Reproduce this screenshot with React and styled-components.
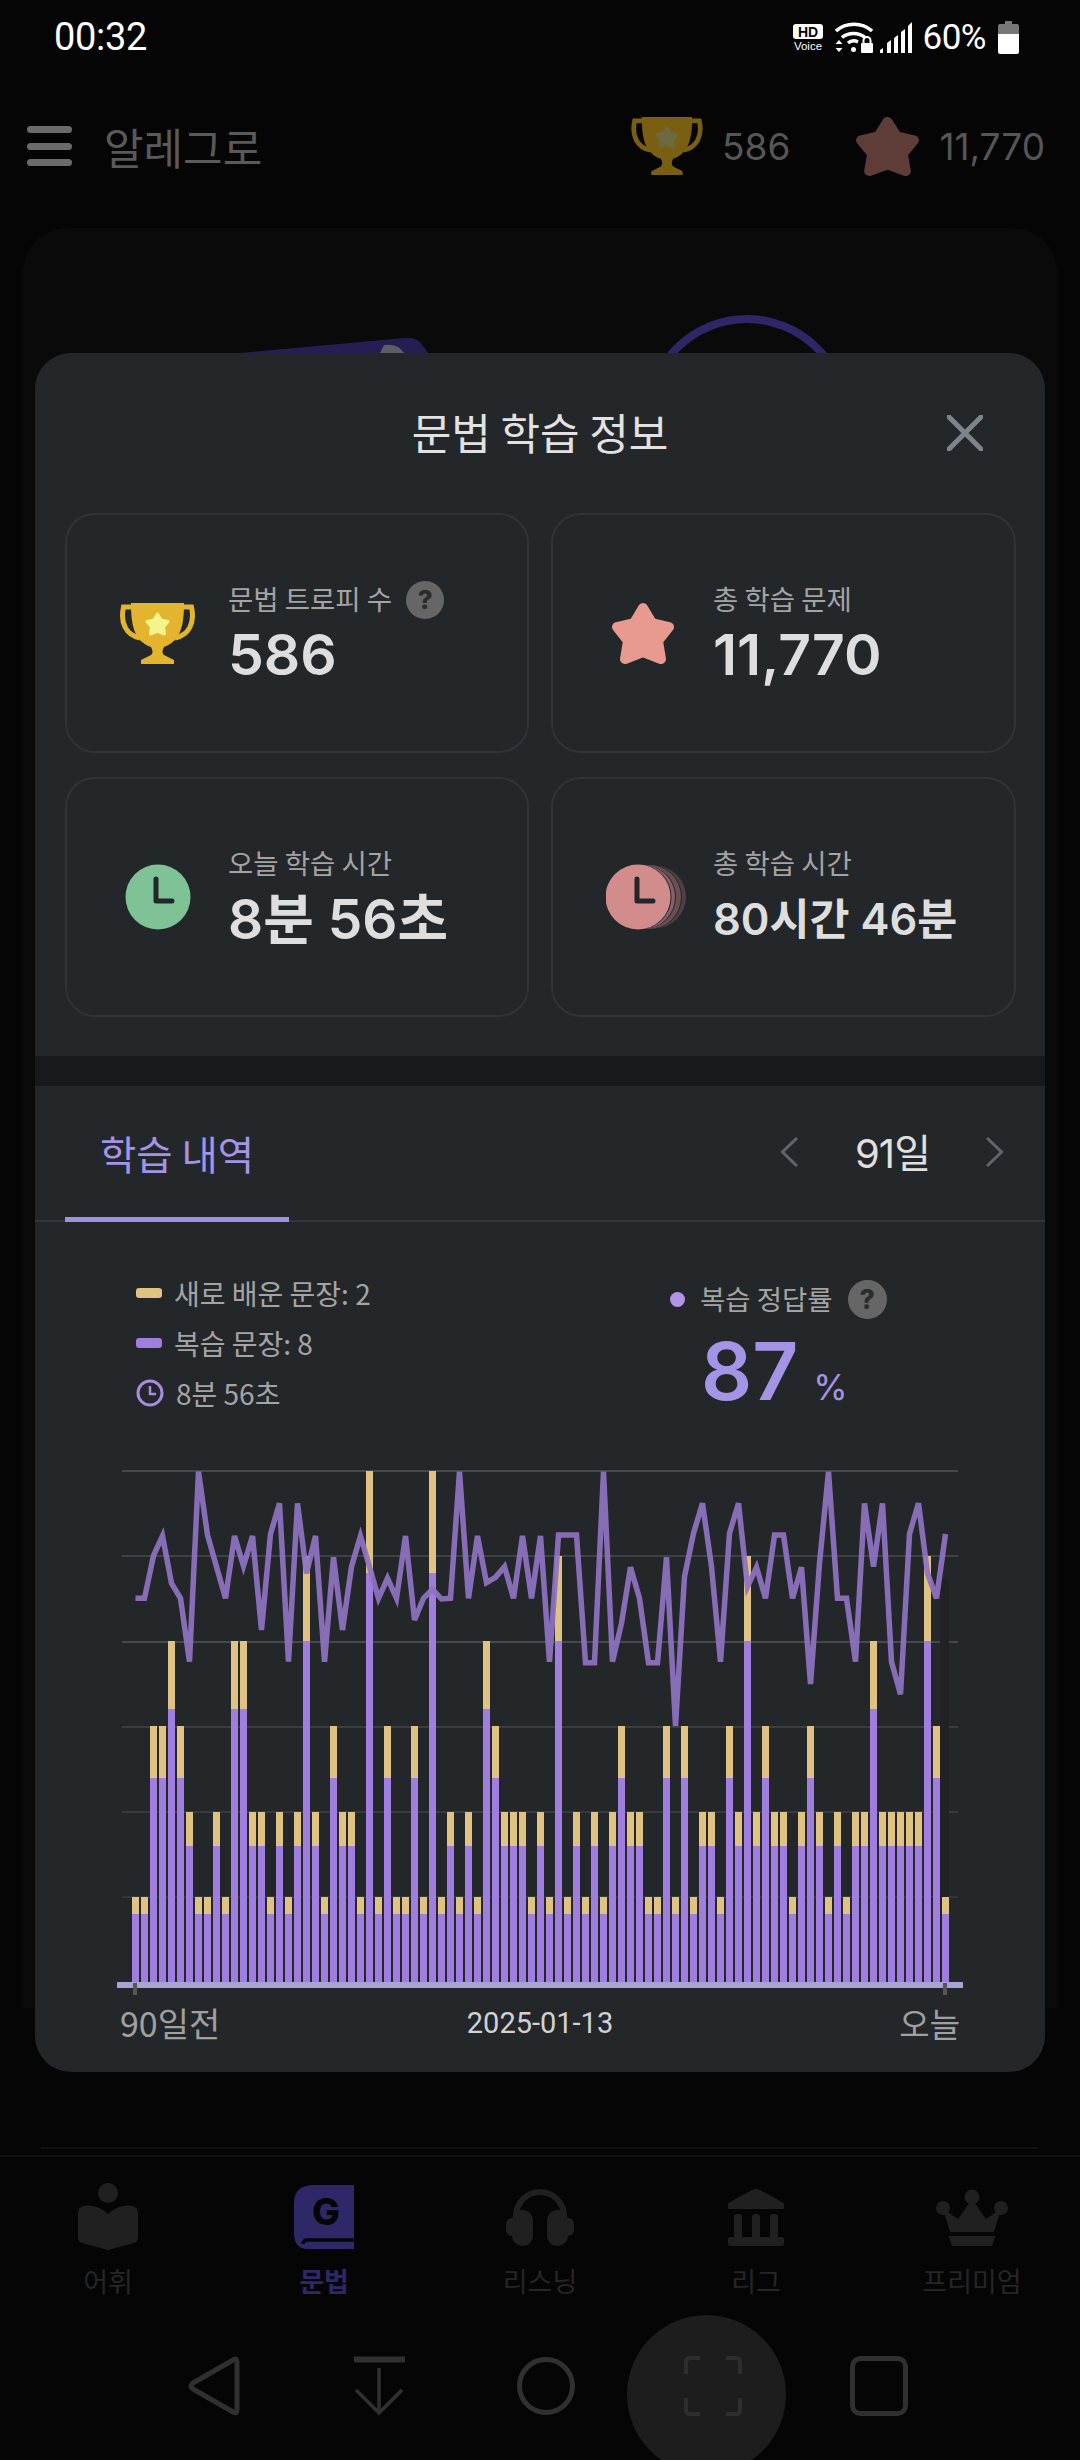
import React from "react";
import styled, { createGlobalStyle } from "styled-components";

const FONT = `Inter, "Noto Sans CJK KR", "Noto Sans", sans-serif`;
const KR = `"Noto Sans CJK KR", "Noto Sans", sans-serif`;
const ROBOTO = `Roboto, "Noto Sans CJK KR", sans-serif`;

const Global = createGlobalStyle`
  html, body { margin: 0; padding: 0; background: #050505; }
  * { box-sizing: border-box; }
`;

const Page = styled.div`
  position: relative; width: 1080px; height: 2460px; overflow: hidden;
  background: #050505; display: flex; flex-direction: column; font-family: ${KR};
`;
const StatusBar = styled.div`
  height: 80px; padding: 0 61px 6px 54px; display: flex; align-items: center; justify-content: space-between;
  color: #fff;
`;
const Clock = styled.span`font: 400 38px/1 ${ROBOTO}; letter-spacing: -0.3px;`;
const StatusIcons = styled.div`display: flex; align-items: center; gap: 7px;`;
const Percent = styled.span`font: 400 35px/1 ${ROBOTO}; margin: 0 5px 0 4px; letter-spacing: -0.5px;`;

const Header = styled.header`
  height: 148px; padding: 0 35px 16px 27px; display: flex; align-items: center;
`;
const Burger = styled.div`
  width: 45px; height: 40px; display: flex; flex-direction: column; justify-content: space-between; margin-right: 32px;
`;
const BurgerLine = styled.i`display: block; height: 7px; border-radius: 4px; background: #6a6a6a;`;
const Brand = styled.span`font: 400 43px/1 ${KR}; color: #5a5a5a; flex: 1;`;
const Stat = styled.div`display: flex; align-items: center; gap: ${p => p.$gap}px; margin-left: ${p => p.$ml}px;`;
const StatNum = styled.span`font: 400 37px/1 ${FONT}; color: #565656;`;

const BackCard = styled.div`
  margin: 0 22px; height: 1780px; border-radius: 46px 46px 0 0; background: #0a0a0a; padding-top: 87px; flex: none;
`;
const Art = styled.svg`display: block;`;
const Rule = styled.div`height: 2px; margin: 139px 42px 6px 41px; background: #0d0f10;`;

const TabBar = styled.nav`
  height: 159px; border-top: 2px solid #0c0e0f; display: grid; grid-template-columns: repeat(5, 216px); padding-top: 27px;
`;
const TabItem = styled.div`
  display: flex; flex-direction: column; align-items: center; color: ${p => (p.$active ? "#2f2868" : "#262626")};
`;
const TabIconBox = styled.div`
  height: 66px; display: flex; align-items: center; justify-content: center; color: ${p => (p.$active ? "#2f2868" : "#202020")};
`;
const TabLabel = styled.span`font: ${p => (p.$active ? 700 : 400)} 27px/1 ${KR}; margin-top: 17px;`;

const SystemNav = styled.div`
  height: 144px; padding-left: 188px; display: flex; align-items: center; flex: none; color: #303030;
`;
const NavGap = styled.div`width: ${p => p.$w}px; flex: none;`;
const Capture = styled.div`
  width: 159px; height: 159px; flex: none; border-radius: 50%; background: #1d1d1d; margin-top: 16px; padding: 0 0 16px 12px;
  display: flex; align-items: center; justify-content: center; color: #2e2e2e;
`;

const Modal = styled.section`
  position: absolute; left: 35px; top: 353px; width: 1010px; height: 1719px; border-radius: 36px; background: #24272a;
  overflow: hidden; color: #e4e4e4; font-family: ${FONT};
`;
const ModalHead = styled.div`
  height: 160px; display: grid; grid-template-columns: 1fr auto 1fr; align-items: center;
`;
const ModalTitle = styled.h2`margin: 0 0 4px; font: 400 43px/1 ${KR}; color: #e2e2e2; letter-spacing: 0;`;
const CloseBtn = styled.div`justify-self: end; margin-right: 62px; width: 36px; height: 36px; color: #7d858c;`;
const StatGrid = styled.div`
  display: grid; grid-template-columns: 464px 465px; gap: 24px 22px; padding: 0 30px 39px;
`;
const StatCard = styled.div`
  height: 240px; border: 2px solid #303337; border-radius: 30px; display: flex; align-items: center;
  padding-left: ${p => p.$pl}px;
`;
const StatIcon = styled.div`width: ${p => p.$w}px; flex: none; display: flex; justify-content: flex-start;`;
const StatBody = styled.div`display: flex; flex-direction: column; gap: 6px;`;
const StatLabelRow = styled.div`display: flex; align-items: center; gap: 14px; height: 38px;`;
const StatLabel = styled.span`font: 400 27.5px/1 ${KR}; color: #a4a4a4; margin-top: -2px;`;
const StatValue = styled.div`font: 600 ${p => p.$size}px/60px ${FONT}; color: #dedede;`;
const Help = styled.span`
  width: ${p => p.$s}px; height: ${p => p.$s}px; border-radius: 50%; background: #666; color: #2a2c2e; flex: none;
  display: inline-flex; align-items: center; justify-content: center; font: 800 ${p => p.$s * 0.68}px/1 ${FONT};
`;
const Band = styled.div`height: 30px; background: #18191c;`;
const TabsRow = styled.div`
  height: 136px; border-bottom: 2px solid #34373a; display: flex; align-items: flex-start; justify-content: space-between; padding-left: 30px;
`;
const ActiveTab = styled.div`
  position: relative; width: 224px; height: 136px; padding-top: 45px; text-align: center; font: 400 39.5px/1.1 ${KR}; color: #a494e6;
  &::after { content: ""; position: absolute; left: 0; right: 0; bottom: 0; height: 5px; background: #a18fe2; }
`;
const RangeNav = styled.div`display: flex; align-items: center; height: 136px; padding: 0 41px 5px 0; color: #5e666c;`;
const RangeText = styled.span`width: 186px; text-align: center; font: 400 40px/1 ${FONT}; color: #e0e0e0; letter-spacing: -1px; padding: 5px 0 0 1px;`;

const Summary = styled.div`
  height: 238px; padding: 46px 0 0 101px; display: grid; grid-template-columns: 534px auto;
`;
const Legend = styled.div`display: flex; flex-direction: column;`;
const LegendRow = styled.div`height: 50px; display: flex; align-items: center; gap: 12px;`;
const Swatch = styled.i`display: block; width: 26px; height: 10px; border-radius: 3px; background: ${p => p.$c};`;
const LegendText = styled.span`font: 400 28px/1 ${KR}; color: #a4a4a4;`;
const Rate = styled.div`display: flex; flex-direction: column;`;
const RateHead = styled.div`display: flex; align-items: center; height: 60px; margin-top: 1px;`;
const Dot = styled.i`display: block; width: 15px; height: 15px; border-radius: 50%; background: #b393ea; margin-right: 15px;`;
const RateLabel = styled.span`font: 400 27.5px/1 ${KR}; color: #a4a4a4; margin-right: 15px;`;
const RateValue = styled.div`
  display: flex; align-items: baseline; margin: 10px 0 0 31px; color: #a494e6;
`;
const RateNum = styled.span`font: 600 80px/64px ${FONT};`;
const RateUnit = styled.span`font: 400 35px/1 ${FONT}; margin-left: 15px;`;

const ChartArea = styled.svg`display: block; margin-left: 75px;`;
const AxisLabels = styled.div`
  margin: 3px 85px 0; height: 40px; display: grid; grid-template-columns: 1fr auto 1fr; align-items: center; color: #a0a0a0;
`;
const AxisEnd = styled.span`font: 400 ${p => p.$size}px/1 ${KR}; text-align: ${p => p.$align};`;
const AxisDate = styled.span`font: 400 29px/1 ${ROBOTO}; color: #d2d2d2;`;

const K = [1,1,3,3,4,3,2,1,1,2,1,4,4,2,2,1,2,1,2,5,2,1,3,2,2,1,6,1,3,1,1,3,1,6,1,2,1,2,1,4,3,2,2,2,1,2,1,5,1,2,1,2,1,2,3,2,2,1,1,3,1,3,1,2,2,1,3,2,5,2,3,2,2,1,2,3,2,1,2,1,2,2,4,2,2,2,2,2,5,3,1];
const LY = [445,445,317,258,400,445,635,65,255,350,445,258,348,258,540,252,160,635,160,370,258,635,322,540,350,258,350,445,385,445,258,510,445,418,447,445,65,445,258,398,382,350,445,258,445,258,635,255,255,255,638,638,65,635,520,352,445,638,638,322,828,380,250,160,350,635,250,160,410,352,445,255,255,445,352,702,340,65,445,445,635,160,350,160,635,733,252,160,370,445,252];
const linePts = LY.map((y, i) => `${135.5 + 9 * i},${(1450 + y / 3).toFixed(1)}`).join(" ");
const GRID = [[1471, 0.9], [1556, 0.7], [1642, 0.9], [1727, 0.6], [1812, 0.55], [1897, 0.4]];
const STEP = 85.2;

const Chart = () => (
  <ChartArea width="860" height="540" viewBox="110 1460 860 540">
    {GRID.map(([y, o]) => <line key={y} x1="122" x2="958" y1={y} y2={y} stroke="#4a4d50" strokeWidth="2" opacity={o} />)}
    <rect x="940" y="1578" width="9" height="404" fill="#202225" />
    <g shapeRendering="crispEdges">
      {K.map((k, i) => {
        const x = 132 + 9 * i;
        const top = 1982 - STEP * k;
        const mid = 1982 - STEP * k * 0.8;
        return (
          <g key={i}>
            <rect x={x} y={top} width="7" height={mid - top} fill="#e0c282" />
            <rect x={x} y={mid} width="7" height={1982 - mid} fill="#a07ee0" />
          </g>
        );
      })}
      <rect x="117" y="1982" width="846" height="6" fill="#a7a4d4" />
      <rect x="133" y="1983" width="4" height="12" fill="#555" />
      <rect x="943" y="1983" width="4" height="12" fill="#555" />
    </g>
    <polyline points={linePts} fill="none" stroke="#8f73c2" strokeOpacity="0.92" strokeWidth="5.5" />
  </ChartArea>
);

const STAR = "32,6 41,21 58,25 47,39 50,57 32,50 14,57 17,39 6,25 23,21";
const StarIcon = ({ c, w = 64, h = 63 }) => (
  <svg width={w} height={h} viewBox="0 0 64 63" preserveAspectRatio="none">
    <polygon points={STAR} fill={c} stroke={c} strokeWidth="10" strokeLinejoin="round" />
  </svg>
);
const TrophyIcon = ({ c, s, w = 75, h = 61 }) => (
  <svg width={w} height={h} viewBox="0 0 75 61">
    <path d="M13 4 H3.5 C0 20 6 32 20 35 M62 4 H71.5 C75 20 69 32 55 35" fill="none" stroke={c} strokeWidth="5" />
    <path d="M11 0 H64 C64 22 61 38 44 44 C42 48 42 50 44 52 L54 57 V61 H21 V57 L31 52 C33 50 33 48 31 44 C14 38 11 22 11 0Z" fill={c} />
    <polygon points="37.5,11 41,17 48,18.5 43.5,24 44.5,31 37.5,28 30.5,31 31.5,24 27,18.5 34,17" fill={s} stroke={s} strokeWidth="3" strokeLinejoin="round" />
  </svg>
);
const FaceClock = ({ c, hand = "#24272a" }) => (
  <svg width="66" height="66" viewBox="0 0 66 66">
    <circle cx="33" cy="33" r="32.5" fill={c} />
    <path d="M31 15 V37 H47" fill="none" stroke={hand} strokeWidth="5" strokeLinejoin="round" strokeLinecap="round" />
  </svg>
);
const StackClock = () => (
  <svg width="82" height="66" viewBox="0 0 82 66">
    <circle cx="49" cy="33" r="31" fill="#4f4044" />
    <circle cx="44" cy="33" r="32" fill="#24272a" />
    <circle cx="43" cy="33" r="32" fill="#6a5055" />
    <circle cx="38" cy="33" r="32" fill="#24272a" />
    <circle cx="37" cy="33" r="32" fill="#86616a" />
    <circle cx="33" cy="33" r="32.5" fill="#24272a" />
    <circle cx="32" cy="33" r="32.5" fill="#d28c8c" />
    <path d="M31 15 V37 H47" fill="none" stroke="#24272a" strokeWidth="5" strokeLinejoin="round" strokeLinecap="round" />
  </svg>
);
const LegendClock = () => (
  <svg width="28" height="28" viewBox="0 0 28 28">
    <circle cx="14" cy="14" r="12" fill="none" stroke="#a98be0" strokeWidth="3" />
    <path d="M14 7 V15 H20" fill="none" stroke="#a98be0" strokeWidth="2.5" />
  </svg>
);
const Chev = ({ left }) => (
  <svg width="19" height="30" viewBox="0 0 19 30">
    <path d={left ? "M17 1 L2.5 15 L17 29" : "M2 1 L16.5 15 L2 29"} fill="none" stroke="currentColor" strokeWidth="3" />
  </svg>
);

const HdVoice = () => (
  <svg width="35" height="27" viewBox="0 0 35 27">
    <rect x="0" y="0" width="30" height="15" rx="3" fill="#fff" />
    <text x="15" y="13" textAnchor="middle" fontFamily="Liberation Sans" fontWeight="700" fontSize="14" fill="#050505">HD</text>
    <text x="15" y="26" textAnchor="middle" fontFamily="Liberation Sans" fontSize="11.5" fill="#fff">Voice</text>
  </svg>
);
const WifiIcon = () => (
  <svg width="38" height="32" viewBox="0 0 38 32">
    <path d="M1 10 C11 1 27 1 37 10" fill="none" stroke="#fff" strokeWidth="3.5" />
    <path d="M7 16.5 C13 11 24 11 30 16.5" fill="none" stroke="#fff" strokeWidth="3.5" />
    <path d="M13 22 C16 19.5 20 19.5 23 21" fill="none" stroke="#fff" strokeWidth="3.5" />
    <circle cx="18.5" cy="28.5" r="2.5" fill="#fff" />
    <path d="M4 21 L7.5 17 L0.5 17Z" transform="rotate(180 4 20)" fill="#fff" />
    <path d="M0.5 27 H7.5 L4 31Z" fill="#fff" />
    <rect x="26" y="22" width="12" height="10" rx="1" fill="#fff" />
    <path d="M28.5 22 V19.5 A3.5 3.5 0 0 1 35.5 19.5 V22" fill="none" stroke="#fff" strokeWidth="2" />
  </svg>
);
const SignalIcon = () => (
  <svg width="32" height="32" viewBox="0 0 32 32">
    <path d="M0 32 V29 L3 27 V32Z M7 32 V22 L11 19 V32Z M14 32 V17 L18 14 V32Z M21 32 V11 L25 8 V32Z M28 32 V5 L32 1 V32Z" fill="#fff" />
  </svg>
);
const BatteryIcon = () => (
  <svg width="21" height="33" viewBox="0 0 21 33">
    <path d="M7 0 H14 V3 H19 Q21 3 21 5 V13 H0 V5 Q0 3 2 3 H7Z" fill="#777" />
    <path d="M0 13 H21 V31 Q21 33 19 33 H2 Q0 33 0 31Z" fill="#fff" />
  </svg>
);

const ReadIcon = () => (
  <svg width="60" height="68" viewBox="0 0 60 68" fill="currentColor">
    <circle cx="30" cy="10" r="10" />
    <path d="M6 23 C14 21 24 25 30 31 C36 25 46 21 54 23 Q60 24 60 30 V55 Q60 59 56 60 L34 66 Q30 68 26 66 L4 60 Q0 59 0 55 V30 Q0 24 6 23Z" />
  </svg>
);
const BookIcon = () => (
  <svg width="60" height="64" viewBox="0 0 60 64">
    <path d="M20 0 H60 V64 H14 Q0 64 0 48 V18 Q0 0 20 0Z" fill="currentColor" />
    <path d="M60 55 H14 Q9 55 9 59" fill="none" stroke="#050505" strokeWidth="3.5" />
    <text x="32" y="40" textAnchor="middle" fontFamily="Inter" fontWeight="800" fontSize="37" fill="#050505">G</text>
  </svg>
);
const PhonesIcon = () => (
  <svg width="68" height="58" viewBox="0 0 68 58" fill="currentColor">
    <path d="M10 34 V28 A24 24 0 0 1 58 28 V34" fill="none" stroke="currentColor" strokeWidth="6" />
    <rect x="6" y="22" width="21" height="36" rx="10" />
    <rect x="41" y="22" width="21" height="36" rx="10" />
    <rect x="0" y="30" width="12" height="18" rx="6" />
    <rect x="56" y="30" width="12" height="18" rx="6" />
  </svg>
);
const BankIcon = () => (
  <svg width="56" height="58" viewBox="0 0 56 58" fill="currentColor">
    <path d="M25 1.5 Q28 0 31 1.5 L56 15 V21 H0 V15Z" />
    <rect x="6" y="26" width="8" height="26" rx="3" />
    <rect x="24" y="26" width="8" height="26" rx="3" />
    <rect x="42" y="26" width="8" height="26" rx="3" />
    <rect x="0" y="49" width="56" height="9" rx="2" />
  </svg>
);
const CrownIcon = () => (
  <svg width="72" height="57" viewBox="0 0 72 57" fill="currentColor">
    <circle cx="36" cy="8" r="7.5" />
    <circle cx="7" cy="19" r="7" />
    <circle cx="65" cy="19" r="7" />
    <path d="M36 10 L50 30 L65 20 L58 43 H14 L7 20 L22 30Z" />
    <path d="M12.5 47 H59.5 L56 57 H16Z" />
  </svg>
);

const TABS = [
  { label: "어휘", Icon: ReadIcon },
  { label: "문법", Icon: BookIcon, active: true },
  { label: "리스닝", Icon: PhonesIcon },
  { label: "리그", Icon: BankIcon },
  { label: "프리미엄", Icon: CrownIcon },
];

export default function App() {
  return (
    <Page>
      <Global />
      <StatusBar>
        <Clock>00:32</Clock>
        <StatusIcons>
          <HdVoice />
          <WifiIcon />
          <SignalIcon />
          <Percent>60%</Percent>
          <BatteryIcon />
        </StatusIcons>
      </StatusBar>
      <Header>
        <Burger><BurgerLine /><BurgerLine /><BurgerLine /></Burger>
        <Brand>알레그로</Brand>
        <Stat $gap={19}>
          <TrophyIcon c="#7a5e12" s="#6d6a40" w={72} h={58} />
          <StatNum>586</StatNum>
        </Stat>
        <Stat $gap={19} $ml={65}>
          <StarIcon c="#5e3d38" w={65} h={61} />
          <StatNum>11,770</StatNum>
        </Stat>
      </Header>
      <BackCard>
        <Art width="1036" height="40" viewBox="0 0 1036 40">
          <path d="M218 38 L382 23 Q392 22 398 27 L406 38Z" fill="#241e52" />
          <path d="M358 38 L362 30 Q376 28 382 38Z" fill="#5d5d66" />
          <circle cx="725" cy="103" r="99" fill="none" stroke="#2e2666" strokeWidth="8" />
        </Art>
      </BackCard>
      <Rule />
      <TabBar>
        {TABS.map(({ label, Icon, active }) => (
          <TabItem key={label} $active={active}>
            <TabIconBox $active={active}><Icon /></TabIconBox>
            <TabLabel $active={active}>{label}</TabLabel>
          </TabItem>
        ))}
      </TabBar>
      <SystemNav>
        <svg width="52" height="60" viewBox="0 0 52 60">
          <path d="M46 3.5 Q49 2 49 6 V54 Q49 58 46 56.5 L5 33 Q1 30 5 27Z" fill="none" stroke="currentColor" strokeWidth="5" strokeLinejoin="round" />
        </svg>
        <NavGap $w={113} />
        <svg width="53" height="60" viewBox="0 0 53 60">
          <path d="M1 3.5 H52" stroke="currentColor" strokeWidth="6" />
          <path d="M26 12 V57 M3 34 L26 57 L49 34" fill="none" stroke="currentColor" strokeWidth="3.5" />
        </svg>
        <NavGap $w={111} />
        <svg width="58" height="60" viewBox="0 0 58 60">
          <circle cx="29" cy="30" r="26.5" fill="none" stroke="currentColor" strokeWidth="5" />
        </svg>
        <NavGap $w={52} />
        <Capture>
          <svg width="58" height="60" viewBox="0 0 58 60">
            <path d="M2 18 V6 Q2 2 6 2 H16 M42 2 H52 Q56 2 56 6 V18 M56 42 V54 Q56 58 52 58 H42 M16 58 H6 Q2 58 2 54 V42" fill="none" stroke="currentColor" strokeWidth="4" />
          </svg>
        </Capture>
        <NavGap $w={64} />
        <svg width="58" height="60" viewBox="0 0 58 60">
          <rect x="2.5" y="2.5" width="53" height="55" rx="8" fill="none" stroke="currentColor" strokeWidth="5" />
        </svg>
      </SystemNav>

      <Modal>
        <ModalHead>
          <span />
          <ModalTitle>문법 학습 정보</ModalTitle>
          <CloseBtn>
            <svg width="36" height="36" viewBox="0 0 36 36">
              <path d="M2 2 L34 34 M34 2 L2 34" stroke="currentColor" strokeWidth="5" strokeLinecap="round" />
            </svg>
          </CloseBtn>
        </ModalHead>
        <StatGrid>
          <StatCard $pl={53}>
            <StatIcon $w={108}><TrophyIcon c="#e3b42e" s="#f4f48d" /></StatIcon>
            <StatBody>
              <StatLabelRow><StatLabel>문법 트로피 수</StatLabel><Help $s={38}>?</Help></StatLabelRow>
              <StatValue $size={57}>586</StatValue>
            </StatBody>
          </StatCard>
          <StatCard $pl={58}>
            <StatIcon $w={102}><StarIcon c="#e99a90" /></StatIcon>
            <StatBody>
              <StatLabelRow><StatLabel>총 학습 문제</StatLabel></StatLabelRow>
              <StatValue $size={57}>11,770</StatValue>
            </StatBody>
          </StatCard>
          <StatCard $pl={58}>
            <StatIcon $w={103}><FaceClock c="#7fc295" /></StatIcon>
            <StatBody>
              <StatLabelRow><StatLabel>오늘 학습 시간</StatLabel></StatLabelRow>
              <StatValue $size={55}>8분 56초</StatValue>
            </StatBody>
          </StatCard>
          <StatCard $pl={53}>
            <StatIcon $w={107}><StackClock /></StatIcon>
            <StatBody>
              <StatLabelRow><StatLabel>총 학습 시간</StatLabel></StatLabelRow>
              <StatValue $size={43.5}>80시간 46분</StatValue>
            </StatBody>
          </StatCard>
        </StatGrid>
        <Band />
        <TabsRow>
          <ActiveTab>학습 내역</ActiveTab>
          <RangeNav>
            <Chev left />
            <RangeText>91일</RangeText>
            <Chev />
          </RangeNav>
        </TabsRow>
        <Summary>
          <Legend>
            <LegendRow><Swatch $c="#e0c282" /><LegendText>새로 배운 문장: 2</LegendText></LegendRow>
            <LegendRow><Swatch $c="#a07ee0" /><LegendText>복습 문장: 8</LegendText></LegendRow>
            <LegendRow><LegendClock /><LegendText>8분 56초</LegendText></LegendRow>
          </Legend>
          <Rate>
            <RateHead><Dot /><RateLabel>복습 정답률</RateLabel><Help $s={39}>?</Help></RateHead>
            <RateValue><RateNum>87</RateNum><RateUnit>%</RateUnit></RateValue>
          </Rate>
        </Summary>
        <Chart />
        <AxisLabels>
          <AxisEnd $size={34} $align="left">90일전</AxisEnd>
          <AxisDate>2025-01-13</AxisDate>
          <AxisEnd $size={33} $align="right">오늘</AxisEnd>
        </AxisLabels>
      </Modal>
    </Page>
  );
}
